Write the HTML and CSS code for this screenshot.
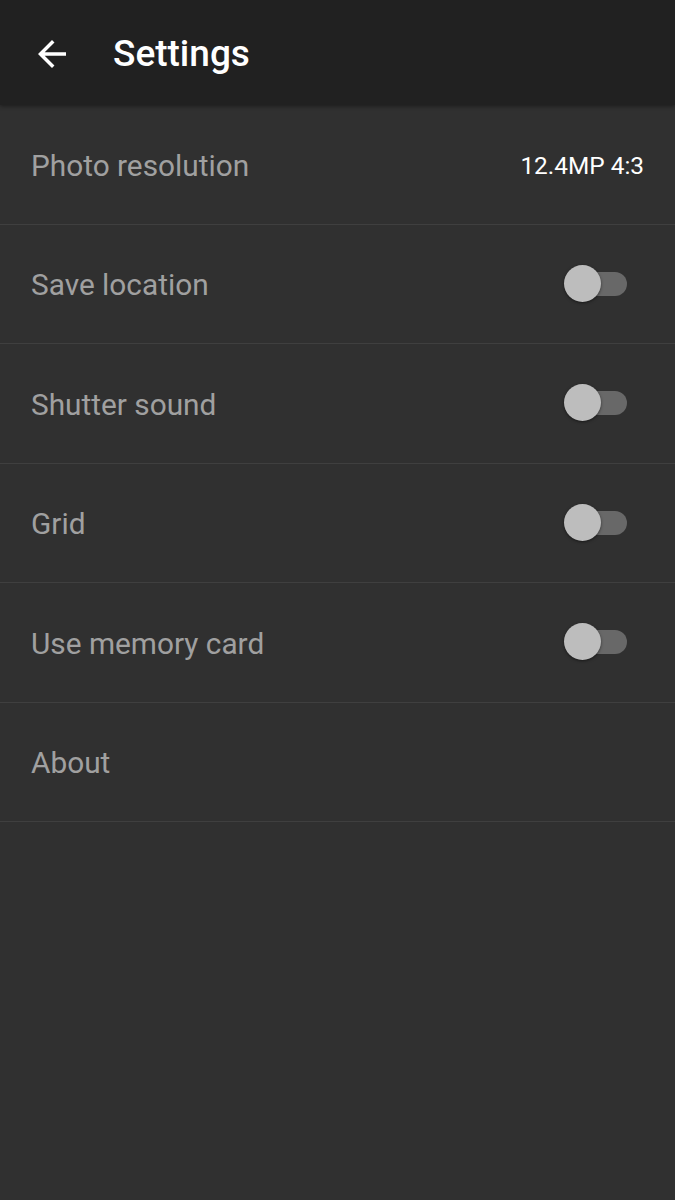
FILE: index.html
```html
<!DOCTYPE html>
<html>
<head>
<meta charset="utf-8">
<link rel="stylesheet" href="styles.css">
</head>
<body>
<header class="appbar">
  <svg class="back" viewBox="0 0 24 24" width="42" height="42"><path d="M20 11H7.83l5.59-5.59L12 4l-8 8 8 8 1.41-1.41L7.83 13H20v-2z" fill="#fff"/></svg>
  <h1 class="title">Settings</h1>
</header>
<main class="list">
  <div class="row"><span class="label">Photo resolution</span><span class="value">12.4MP 4:3</span></div>
  <div class="row"><span class="label">Save location</span><span class="switch"><span class="track"></span><span class="thumb"></span></span></div>
  <div class="row"><span class="label">Shutter sound</span><span class="switch"><span class="track"></span><span class="thumb"></span></span></div>
  <div class="row"><span class="label">Grid</span><span class="switch"><span class="track"></span><span class="thumb"></span></span></div>
  <div class="row"><span class="label">Use memory card</span><span class="switch"><span class="track"></span><span class="thumb"></span></span></div>
  <div class="row"><span class="label">About</span></div>
</main>
</body>
</html>
```
FILE: styles.css
```css
html, body {
  margin: 0;
  padding: 0;
  background: #303030;
  font-family: Roboto, "Noto Sans", sans-serif;
  height: 1200px;
  overflow: hidden;
}
.appbar {
  height: 105px;
  background: #212121;
  display: flex;
  align-items: center;
  box-shadow: 0 1px 4px rgba(0,0,0,0.45);
  position: relative;
  z-index: 1;
}
.back {
  margin-left: 31px;
  margin-top: 2px;
}
.title {
  margin: 0 0 0 40px;
  color: #fff;
  font-size: 37px;
  font-weight: 500;
  margin-top: 2px;
}
.list {
  display: flex;
  flex-direction: column;
}
.row {
  height: 118.5px;
  border-bottom: 1px solid #3f3f3f;
  display: flex;
  align-items: center;
  justify-content: space-between;
  padding: 0 31px;
  box-sizing: content-box;
}
.label {
  color: #a0a0a0;
  font-size: 29.8px;
  margin-top: 2px;
}
.value {
  color: #fff;
  font-size: 24.4px;
  margin-top: 2px;
}
.switch {
  position: relative;
  width: 63px;
  height: 36px;
  margin-right: 17px;
}
.track {
  position: absolute;
  left: 8px;
  right: 0;
  top: 6px;
  height: 24px;
  border-radius: 12px;
  background: #686868;
}
.thumb {
  position: absolute;
  left: 0;
  top: -1px;
  width: 37px;
  height: 37px;
  border-radius: 50%;
  background: #bdbdbd;
  box-shadow: 0 1px 3px rgba(0,0,0,0.5);
}
```
